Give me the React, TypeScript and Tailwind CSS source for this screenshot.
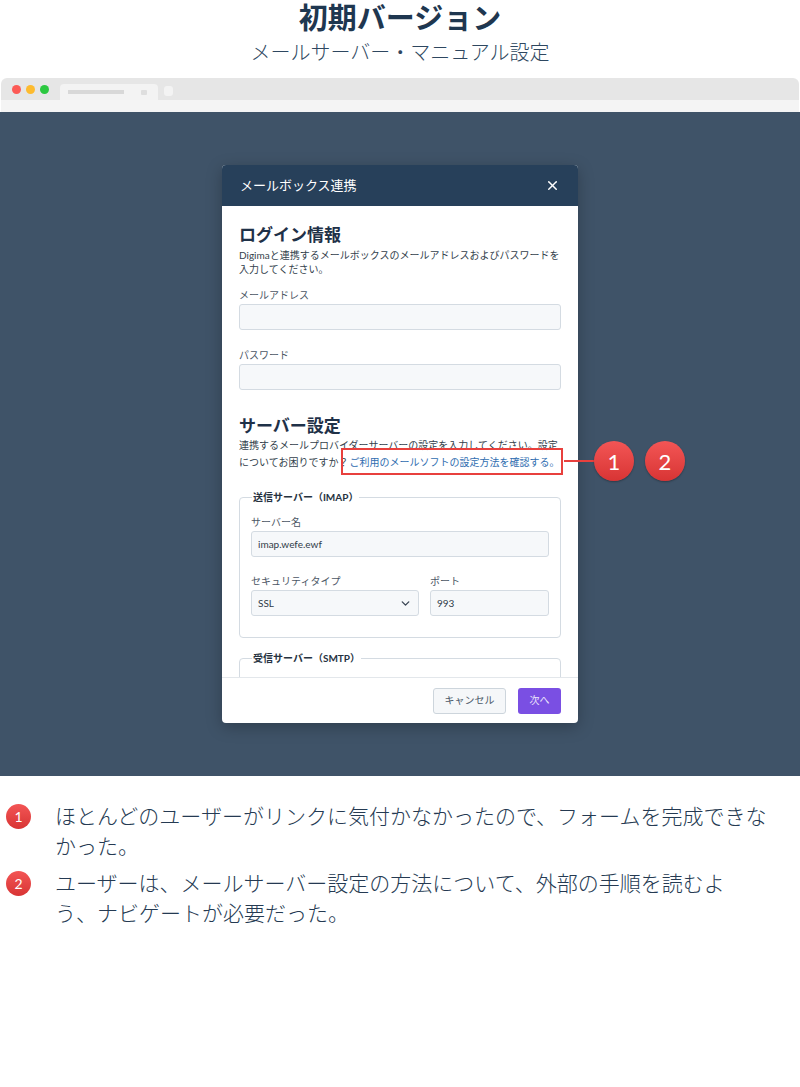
import { X, ChevronDown } from 'lucide-react';

const font = { fontFamily: "Lato, 'Noto Sans CJK JP', sans-serif" };

function Field({ label, value, className = '' }: { label: string; value?: string; className?: string }) {
  return (
    <div className={className}>
      <div className="text-[10px] leading-[14px] text-[#4b5664]">{label}</div>
      <div className="mt-[2px] h-[26px] rounded-[3px] border border-[#d4dbe2] bg-[#f6f8fa] px-[6px] text-[10px] leading-[24px] text-[#2f3b48]">
        {value}
      </div>
    </div>
  );
}

function Badge({ n, size }: { n: number; size: 'lg' | 'sm' }) {
  return (
    <div
      className={
        size === 'lg'
          ? 'flex h-[40px] w-[40px] items-center justify-center rounded-full bg-gradient-to-b from-[#f35555] to-[#d83434] text-[22px] text-white shadow-[0_1px_2px_rgba(0,0,0,0.3)]'
          : 'flex h-[25px] w-[25px] shrink-0 items-center justify-center rounded-full bg-gradient-to-b from-[#f35555] to-[#d83434] text-[14px] font-normal text-white'
      }
    >
      {n}
    </div>
  );
}

export default function App() {
  return (
    <div className="h-[1087px] w-[800px] bg-white" style={font}>
      {/* Heading */}
      <div className="pt-[1px] text-center">
        <h1 className="text-[29px] font-bold leading-[34px] text-[#1f3750]">初期バージョン</h1>
        <p className="mt-[3px] text-[20px] font-light leading-[28px] text-[#2e4760]">メールサーバー・マニュアル設定</p>
      </div>

      {/* Browser chrome */}
      <div className="mt-[12px]">
        <div className="mx-[1px] flex h-[22px] items-end rounded-t-[6px] bg-[#e6e6e6] pl-[11px]">
          <div className="mb-[6px] flex gap-[5px]">
            <span className="h-[9px] w-[9px] rounded-full bg-[#fc5a55]" />
            <span className="h-[9px] w-[9px] rounded-full bg-[#fdbb2f]" />
            <span className="h-[9px] w-[9px] rounded-full bg-[#2bc840]" />
          </div>
          <div className="ml-[11px] flex h-[16px] w-[98px] items-center rounded-t-[4px] bg-[#f3f3f3] pl-[8px]">
            <span className="h-[4px] w-[56px] bg-[#d8d8d8]" />
            <span className="ml-[17px] h-[5px] w-[6px] rounded-[1px] bg-[#dedede]" />
          </div>
          <div className="mb-[4px] ml-[6px] h-[10px] w-[9px] rounded-[3px] bg-[#f3f3f3]" />
        </div>
        <div className="mx-[1px] h-[12px] bg-[#f4f4f4]" />
      </div>

      {/* Page area */}
      <div className="h-[664px] bg-[#3f5368] pt-[53px]">
        <div className="relative mx-auto w-[356px] rounded-[4px] bg-white shadow-[0_4px_16px_rgba(0,0,0,0.25)]">
          <div className="flex h-[41px] items-center justify-between rounded-t-[4px] bg-[#27405a] px-[18px]">
            <span className="text-[13px] text-white">メールボックス連携</span>
            <X size={15} strokeWidth={2.4} className="text-white" />
          </div>

          <div className="h-[471px] overflow-hidden px-[17px] pt-[17px]">
            <h2 className="text-[17px] font-bold leading-[24px] text-[#1f3148]">ログイン情報</h2>
            <p className="mt-[1px] text-[10px] leading-[14px] text-[#333f4c]">
              Digimaと連携するメールボックスのメールアドレスおよびパスワードを
              <br />
              入力してください。
            </p>
            <Field label="メールアドレス" className="mt-[12px]" />
            <Field label="パスワード" className="mt-[18px]" />

            <h2 className="mt-[24px] text-[17px] font-bold leading-[24px] text-[#1f3148]">サーバー設定</h2>
            <p className="-mt-[1px] whitespace-nowrap text-[10px] leading-[17px] text-[#333f4c]">
              連携するメールプロバイダーサーバーの設定を入力してください。設定
              <br />
              についてお困りですか？
              <span className="relative ml-[1px] text-[#2f6db0]">
                ご利用のメールソフトの設定方法を確認する。
                <span className="absolute -bottom-[7px] -left-[8px] -right-[4px] -top-[8px] border-2 border-[#e8403d]" />
              </span>
            </p>

            <fieldset className="mt-[19px] rounded-[4px] border border-[#d4dbe2] px-[11px] pb-[21px]">
              <legend className="ml-[1px] px-[1px] text-[10px] font-bold leading-[14px] text-[#26323f]">
                送信サーバー（IMAP）
              </legend>
              <Field label="サーバー名" value="imap.wefe.ewf" className="mt-[11px]" />
              <div className="mt-[17px] flex gap-[11px]">
                <div className="w-[168px]">
                  <div className="text-[10px] leading-[14px] text-[#4b5664]">セキュリティタイプ</div>
                  <div className="mt-[2px] flex h-[26px] items-center justify-between rounded-[3px] border border-[#d4dbe2] bg-[#f6f8fa] pl-[6px] pr-[6px] text-[10px] text-[#2f3b48]">
                    SSL
                    <ChevronDown size={13} strokeWidth={2.5} className="text-[#3a4654]" />
                  </div>
                </div>
                <Field label="ポート" value="993" className="flex-1" />
              </div>
            </fieldset>

            <fieldset className="mt-[13px] h-[40px] rounded-[4px] border border-[#d4dbe2] px-[11px]">
              <legend className="ml-[1px] px-[1px] text-[10px] font-bold leading-[14px] text-[#26323f]">
                受信サーバー（SMTP）
              </legend>
            </fieldset>
          </div>

          <div className="flex h-[46px] items-center justify-end gap-[12px] border-t border-[#e3e7eb] px-[17px]">
            <button className="h-[26px] w-[73px] rounded-[3px] border border-[#cdd5dc] bg-[#f5f7f9] text-[10px] text-[#4a5868]">
              キャンセル
            </button>
            <button className="h-[26px] w-[43px] rounded-[3px] bg-[#7a4fe3] text-[10px] text-[#ece6fb]">次へ</button>
          </div>

          {/* annotation connector and badges */}
          <div className="absolute left-[342px] top-[276px] flex items-center">
            <span className="h-[2px] w-[30px] bg-[#e8403d]" />
            <Badge n={1} size="lg" />
            <span className="w-[11px]" />
            <Badge n={2} size="lg" />
          </div>
        </div>
      </div>

      {/* Notes */}
      <div className="px-[6px] pt-[28px] text-[21px] font-light leading-[30px] text-[#253a52]">
        <div className="flex gap-[24px]">
          <Badge n={1} size="sm" />
          <p className="-mt-[3px] whitespace-nowrap">
            ほとんどのユーザーがリンクに気付かなかったので、フォームを完成できな
            <br />
            かった。
          </p>
        </div>
        <div className="mt-[10px] flex gap-[24px]">
          <Badge n={2} size="sm" />
          <p className="-mt-[3px] whitespace-nowrap">
            ユーザーは、メールサーバー設定の方法について、外部の手順を読むよ
            <br />
            う、ナビゲートが必要だった。
          </p>
        </div>
      </div>
    </div>
  );
}
